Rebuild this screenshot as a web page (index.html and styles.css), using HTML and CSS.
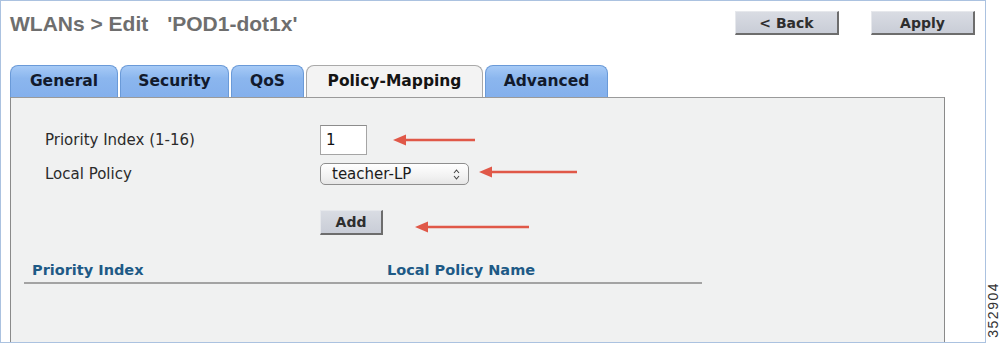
FILE: index.html
```html
<!DOCTYPE html>
<html>
<head>
<meta charset="utf-8">
<link rel="stylesheet" href="styles.css">
</head>
<body>
<div class="page">
  <div class="frame">
    <div class="header">
      <h1 class="title"><span class="title-path">WLANs &gt; Edit</span><span class="title-name">'POD1-dot1x'</span></h1>
      <div class="actions">
        <button class="btn btn-wide">&lt; Back</button>
        <button class="btn btn-wide">Apply</button>
      </div>
    </div>
    <div class="tabs">
      <div class="tab">General</div>
      <div class="tab">Security</div>
      <div class="tab">QoS</div>
      <div class="tab tab-active">Policy-Mapping</div>
      <div class="tab">Advanced</div>
    </div>
    <div class="panel">
      <div class="form">
        <div class="row row-index">
          <div class="label">Priority Index (1-16)</div>
          <div class="input">1</div>
          <svg class="arrow arrow-1" width="82" height="12" viewBox="0 0 82 12"><line x1="10" y1="6" x2="82" y2="6" stroke="#e05848" stroke-width="2.5"/><polygon points="0,6 13,0.5 13,11.5" fill="#e05848"/></svg>
        </div>
        <div class="row row-policy">
          <div class="label">Local Policy</div>
          <div class="select"><span class="select-text">teacher-LP</span><svg class="updown" width="7" height="11" viewBox="0 0 7 11"><path d="M1 4 L3.5 1 L6 4" fill="none" stroke="#444" stroke-width="1.1"/><path d="M1 7 L3.5 10 L6 7" fill="none" stroke="#444" stroke-width="1.1"/></svg></div>
          <svg class="arrow arrow-2" width="98" height="12" viewBox="0 0 98 12"><line x1="10" y1="6" x2="98" y2="6" stroke="#e05848" stroke-width="2.5"/><polygon points="0,6 13,0.5 13,11.5" fill="#e05848"/></svg>
        </div>
        <div class="row row-add">
          <div class="label"></div>
          <button class="btn btn-add">Add</button>
          <svg class="arrow arrow-3" width="114" height="12" viewBox="0 0 114 12"><line x1="10" y1="6" x2="114" y2="6" stroke="#e05848" stroke-width="2.5"/><polygon points="0,6 13,0.5 13,11.5" fill="#e05848"/></svg>
        </div>
      </div>
      <div class="table-head">
        <div class="th th-index">Priority Index</div>
        <div class="th">Local Policy Name</div>
      </div>
    </div>
  </div>
  <div class="side"><span class="figno">352904</span></div>
</div>
</body>
</html>
```

FILE: styles.css
```css
html, body {
  margin: 0;
  padding: 0;
  background: #ffffff;
}
body {
  width: 1000px;
  height: 343px;
  overflow: hidden;
  font-family: "DejaVu Sans", Verdana, sans-serif;
}
.page {
  display: flex;
  width: 1000px;
  height: 343px;
}
.frame {
  width: 984px;
  height: 341px;
  border: 1px solid #abc2e0;
  display: flex;
  flex-direction: column;
  background: #ffffff;
}
.header {
  display: flex;
  justify-content: space-between;
  align-items: flex-start;
  padding: 10px 10px 0 9px;
  height: 24px;
}
.title {
  margin: 2px 0 0 0;
  font-family: "Liberation Sans", Arial, sans-serif;
  font-weight: bold;
  font-size: 21px;
  line-height: 22px;
  color: #6e6e6e;
  white-space: nowrap;
}
.title-name {
  margin-left: 19px;
}
.actions {
  display: flex;
  gap: 32px;
}
.btn {
  font-family: "DejaVu Sans", Verdana, sans-serif;
  font-weight: bold;
  font-size: 14px;
  color: #2e2e2e;
  background: linear-gradient(#d9dce3, #c9cdd7);
  border-top: 1px solid #e6e8ec;
  border-left: 1px solid #e6e8ec;
  border-right: 2px solid #6d6d6d;
  border-bottom: 2px solid #6d6d6d;
  padding: 0;
  margin: 0;
  box-sizing: border-box;
}
.btn-wide {
  width: 104px;
  height: 24px;
}
.tabs {
  display: flex;
  gap: 2px;
  margin: 30px 0 0 9px;
  height: 32px;
}
.tab {
  box-sizing: border-box;
  height: 32px;
  padding: 0 17px;
  line-height: 31px;
  font-weight: bold;
  font-size: 15.5px;
  color: #121a2c;
  text-align: center;
  background: linear-gradient(#a6caf6, #8bb6ee 40%, #84b0ec);
  border: 1px solid #6a9ad8;
  border-bottom: none;
  border-radius: 8px 8px 0 0;
}
.tab:nth-child(1) { width: 108px; }
.tab:nth-child(2) { width: 109px; }
.tab:nth-child(3) { width: 73px; }
.tab:nth-child(4) { width: 177px; }
.tab:nth-child(5) { width: 123px; }
.tab-active {
  background: #f3f3f3;
  border-color: #a9a9a9;
  color: #141414;
}
.panel {
  width: 935px;
  margin-left: 9px;
  flex: 1;
  box-sizing: border-box;
  background: #f0f1f1;
  border-top: 1px solid #9a9a9a;
  border-left: 1px solid #8a8a8a;
  border-right: 1px solid #8a8a8a;
  padding: 27px 0 0 0;
}
.form {
  display: flex;
  flex-direction: column;
  padding-left: 34px;
}
.row {
  display: flex;
  align-items: center;
}
.row-index {
  height: 30px;
}
.row-policy {
  height: 22px;
  margin-top: 8px;
}
.row-add {
  height: 25px;
  margin-top: 25px;
}
.label {
  width: 275px;
  font-size: 15px;
  color: #2b2b2b;
}
.input {
  box-sizing: border-box;
  width: 47px;
  height: 30px;
  background: #ffffff;
  border: 1px solid #a5a5a5;
  border-top-color: #8c8c8c;
  font-size: 15px;
  line-height: 28px;
  padding-left: 5px;
  color: #111;
}
.select {
  box-sizing: border-box;
  width: 149px;
  height: 22px;
  display: flex;
  align-items: center;
  justify-content: space-between;
  padding: 0 8px 0 11px;
  border: 1px solid #8e8e8e;
  border-radius: 5px;
  background: linear-gradient(#ffffff, #f2f2f2 60%, #e6e6e6);
  font-size: 15px;
  color: #1b1b1b;
}
.select-text {
  line-height: 20px;
}
.btn-add {
  width: 63px;
  height: 25px;
}
.arrow {
  display: block;
}
.arrow-1 { margin-left: 26px; }
.arrow-2 { margin-left: 10px; margin-top: -4px; }
.arrow-3 { margin-left: 32px; margin-top: 9px; }
.table-head {
  display: flex;
  width: 678px;
  margin: 24px 0 0 13px;
  border-bottom: 2px solid #a3a3a3;
}
.th {
  font-weight: bold;
  font-size: 14.5px;
  line-height: 23px;
  color: #1e5a86;
}
.th-index {
  width: 355px;
  padding-left: 8px;
}
.side {
  flex: 1;
  display: flex;
  align-items: flex-end;
  padding: 0 0 5px 2px;
}
.figno {
  writing-mode: vertical-rl;
  transform: rotate(180deg);
  font-family: "Liberation Sans", Arial, sans-serif;
  font-size: 14px;
  letter-spacing: 1.5px;
  color: #333;
  line-height: 11px;
}
```
